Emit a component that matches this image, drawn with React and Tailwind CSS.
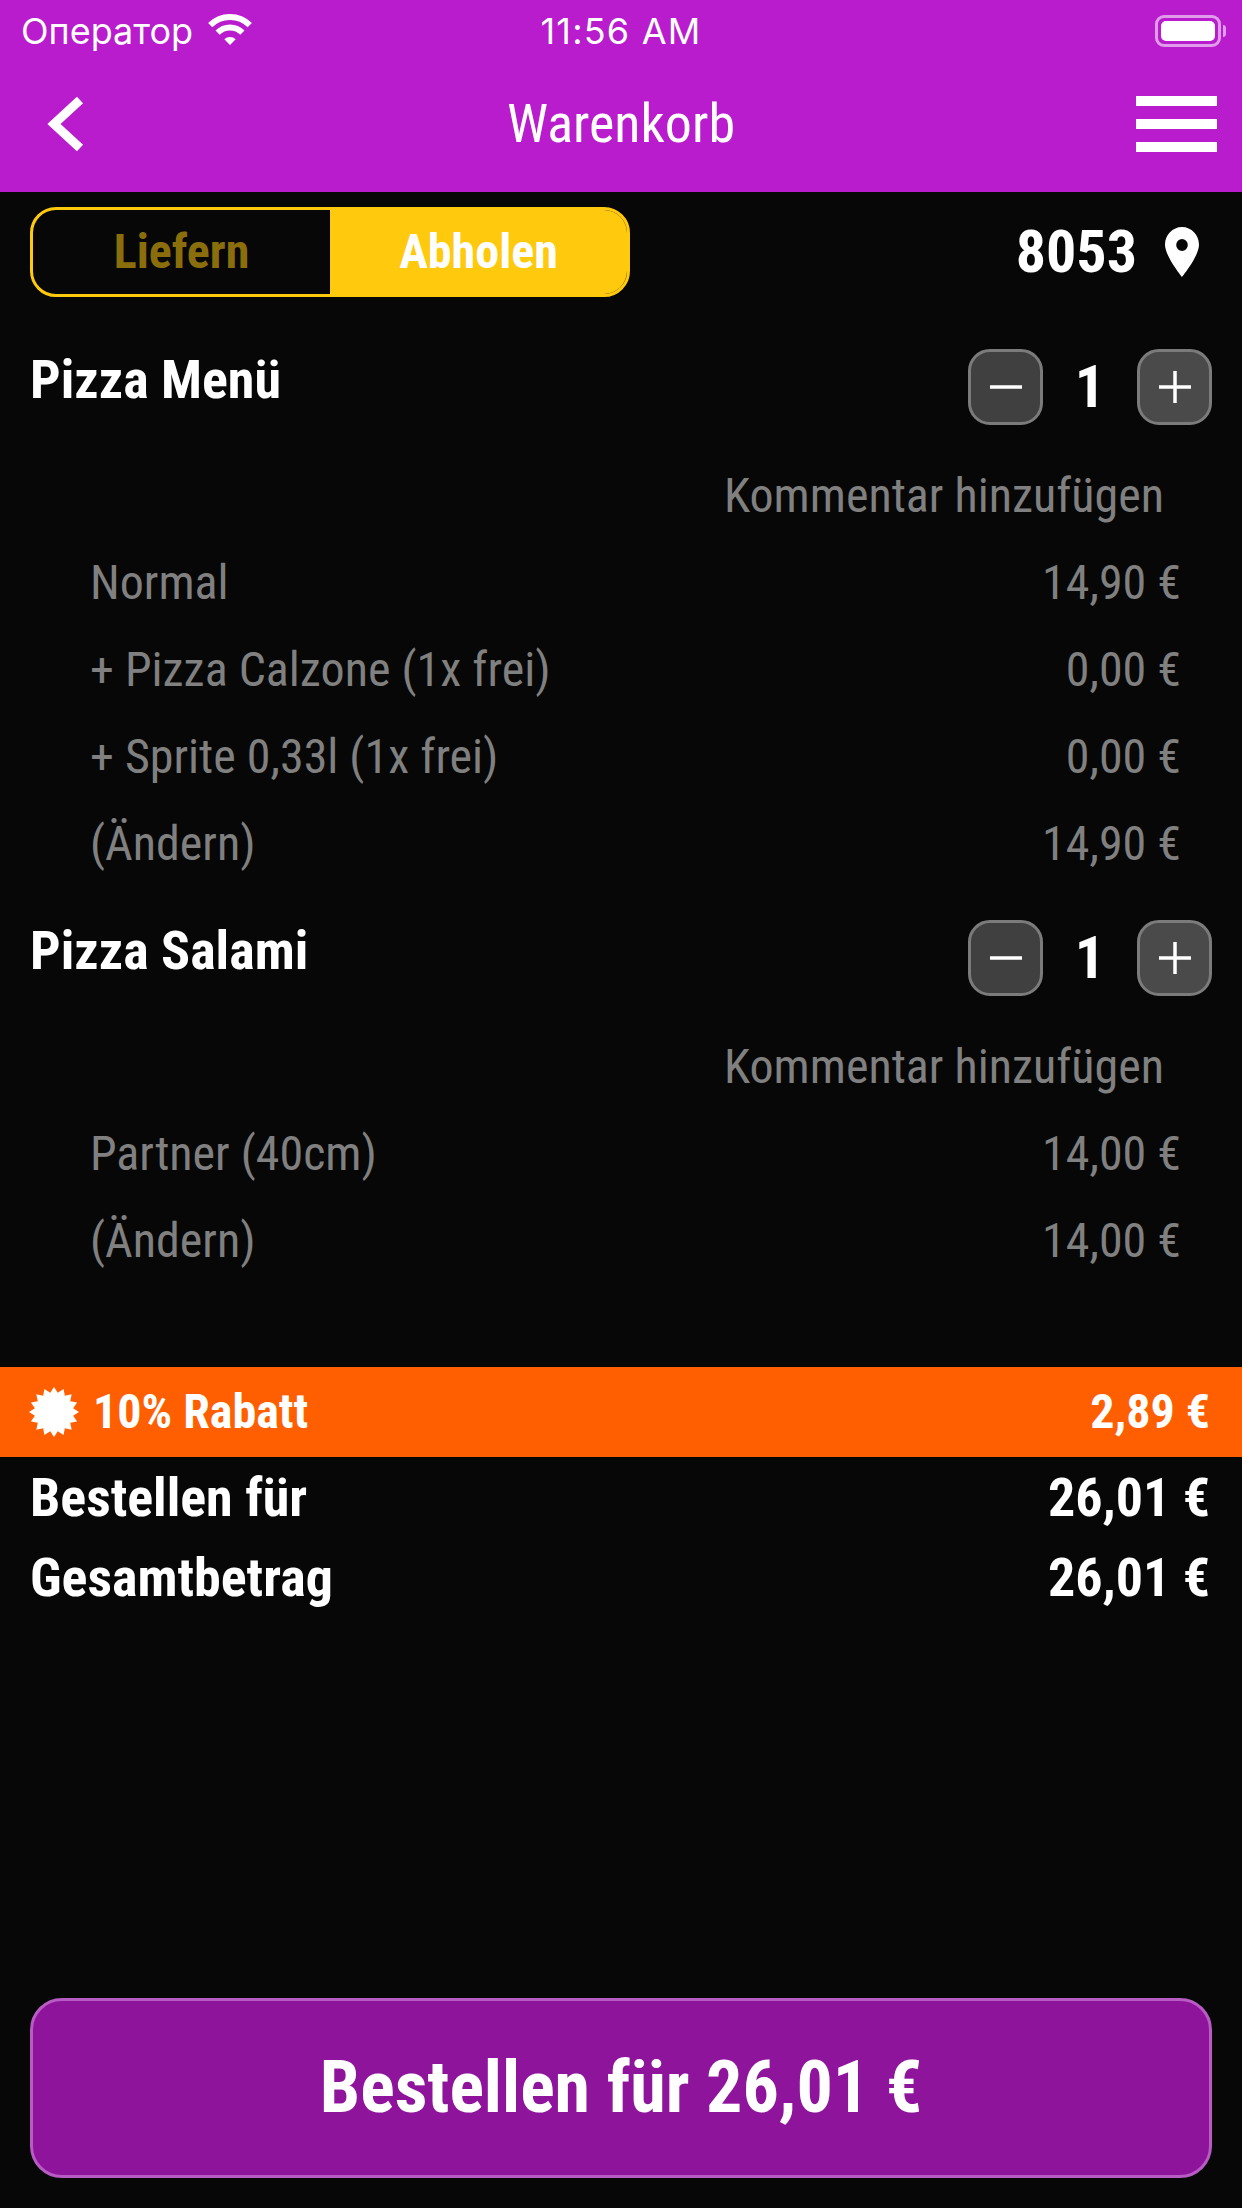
const FONT = "font-['Roboto',sans-serif] font-stretch-[75%]";

const starPoints = Array.from({ length: 32 }, (_, i) => {
  const r = i % 2 === 0 ? 25 : 19.5;
  const a = (i * Math.PI) / 16 - Math.PI / 2;
  return `${(25 + r * Math.cos(a)).toFixed(2)},${(25 + r * Math.sin(a)).toFixed(2)}`;
}).join(" ");

function QtyButton({ plus }) {
  return (
    <div className={`flex h-[76px] w-[75px] items-center justify-center rounded-[22px] border-[3px] border-[#7b7b7b] ${plus ? "bg-[#4a4a4a]" : "bg-[#404040]"}`}>
      <svg width="32" height="32" viewBox="0 0 32 32" fill="none" stroke="#fff" strokeWidth="3.5">
        <path d="M0 16H32" />
        {plus && <path d="M16 0V32" />}
      </svg>
    </div>
  );
}

function PriceRow({ label, price }) {
  return (
    <div className="flex h-[87px] items-center justify-between pl-[90px] pr-[61px] pt-[1px] text-[48px] text-[#808080]">
      <span>{label}</span>
      <span>{price}</span>
    </div>
  );
}

function Item({ title, rows, className }) {
  return (
    <section className={className}>
      <div className="flex h-[76px] items-start justify-between pl-[30px] pr-[30px]">
        <h2 className="text-[54px] font-bold leading-[62px] text-white">{title}</h2>
        <div className="flex items-center">
          <QtyButton />
          <span className="w-[94px] text-center text-[60px] font-bold leading-none text-white">1</span>
          <QtyButton plus />
        </div>
      </div>
      <div className="mt-[27px] flex h-[87px] items-center justify-end pr-[78px] pt-[1px] text-[48px] text-[#808080]">
        Kommentar hinzufügen
      </div>
      {rows.map(([label, price]) => (
        <PriceRow key={label} label={label} price={price} />
      ))}
    </section>
  );
}

export default function App() {
  return (
    <div className={`flex h-[2208px] w-[1242px] flex-col overflow-hidden bg-[#070707] ${FONT}`}>
      <header className="h-[192px] bg-[#b81ccc] text-white">
        <div className="grid h-[60px] grid-cols-3 items-center pl-[21px] pr-[16px] pt-[2px] font-['Inter',sans-serif] text-[36px] font-normal [font-stretch:100%]">
          <div className="flex items-center gap-[14px]">
            <span>Оператор</span>
            <svg width="46" height="34" viewBox="0 0 46 34" className="-mt-[2px]">
              <path d="M3.200 12.200A28 28 0 0 1 42.800 12.200" fill="none" stroke="#fff" strokeWidth="6" />
              <path d="M10.600 19.600A17.500 17.500 0 0 1 35.400 19.600" fill="none" stroke="#fff" strokeWidth="6" />
              <path d="M23 32L17.300 26.300A8 8 0 0 1 28.700 26.300Z" fill="#fff" />
            </svg>
          </div>
          <div className="-ml-[5px] whitespace-nowrap text-center tracking-[1.2px]">11:56 AM</div>
          <div className="flex items-center justify-end">
            <div className="flex h-[32px] w-[66px] items-center rounded-[9px] border-[3px] border-[#e09cea] p-[3px]">
              <div className="h-full w-full rounded-[5px] bg-white" />
            </div>
            <div className="ml-[2px] h-[12px] w-[3px] rounded-r-full bg-[#e09cea]" />
          </div>
        </div>
        <div className="grid h-[132px] grid-cols-[1fr_auto_1fr] items-center pb-[5px]">
          <svg width="38" height="54" viewBox="0 0 38 54" fill="none" stroke="#fff" strokeWidth="9" className="ml-[46px]">
            <path d="M34 3L8 27L34 51" />
          </svg>
          <h1 className="text-[54px] font-normal">Warenkorb</h1>
          <div className="flex flex-col items-end gap-[13px] pr-[25px]">
            <div className="h-[10px] w-[81px] bg-white" />
            <div className="h-[10px] w-[81px] bg-white" />
            <div className="h-[10px] w-[81px] bg-white" />
          </div>
        </div>
      </header>

      <div className="mt-[15px] flex h-[90px] items-center justify-between pl-[30px] pr-[43px]">
        <div className="flex h-[90px] w-[600px] overflow-hidden rounded-[26px] border-[3px] border-[#ffc90d] text-[48px] font-bold">
          <div className="flex w-[297px] items-center justify-center text-[#8b6e0c]">Liefern</div>
          <div className="flex flex-1 items-center justify-center bg-[#ffc90d] text-white">Abholen</div>
        </div>
        <div className="flex items-center gap-[28px] text-white">
          <span className="text-[60px] font-bold leading-none">8053</span>
          <svg width="34" height="50" viewBox="0 0 34 48" fill="#fff" preserveAspectRatio="none">
            <path fillRule="evenodd" d="M17 0C7.600 0 0 7.500 0 17C0 28 17 48 17 48S34 28 34 17C34 7.500 26.400 0 17 0ZM17 11.500A5.800 5.800 0 1 1 17 23.100A5.800 5.800 0 1 1 17 11.500Z" />
          </svg>
        </div>
      </div>

      <Item
        className="mt-[52px]"
        title="Pizza Menü"
        rows={[
          ["Normal", "14,90 €"],
          ["+ Pizza Calzone (1x frei)", "0,00 €"],
          ["+ Sprite 0,33l (1x frei)", "0,00 €"],
          ["(Ändern)", "14,90 €"],
        ]}
      />
      <Item
        className="mt-[33px]"
        title="Pizza Salami"
        rows={[
          ["Partner (40cm)", "14,00 €"],
          ["(Ändern)", "14,00 €"],
        ]}
      />

      <div className="mt-[83px] flex h-[90px] items-center justify-between bg-[#ff5f00] pl-[29px] pr-[32px] text-[48px] font-bold text-white">
        <div className="flex items-center gap-[14px]">
          <svg width="50" height="50" viewBox="0 0 50 50" fill="#fff">
            <polygon points={starPoints} />
          </svg>
          <span>10% Rabatt</span>
        </div>
        <span>2,89 €</span>
      </div>

      <div className="flex h-[80px] items-center justify-between pl-[30px] pr-[32px] text-[54px] font-bold text-white">
        <span>Bestellen für</span>
        <span>26,01 €</span>
      </div>
      <div className="flex h-[80px] items-center justify-between pl-[30px] pr-[32px] text-[54px] font-bold text-white">
        <span>Gesamtbetrag</span>
        <span>26,01 €</span>
      </div>

      <button className="mx-[30px] mb-[30px] mt-auto flex h-[180px] items-center justify-center rounded-[32px] border-[3px] border-[#b85cc4] bg-[#8f149c] text-[72px] font-bold text-white">
        Bestellen für 26,01 €
      </button>
    </div>
  );
}
